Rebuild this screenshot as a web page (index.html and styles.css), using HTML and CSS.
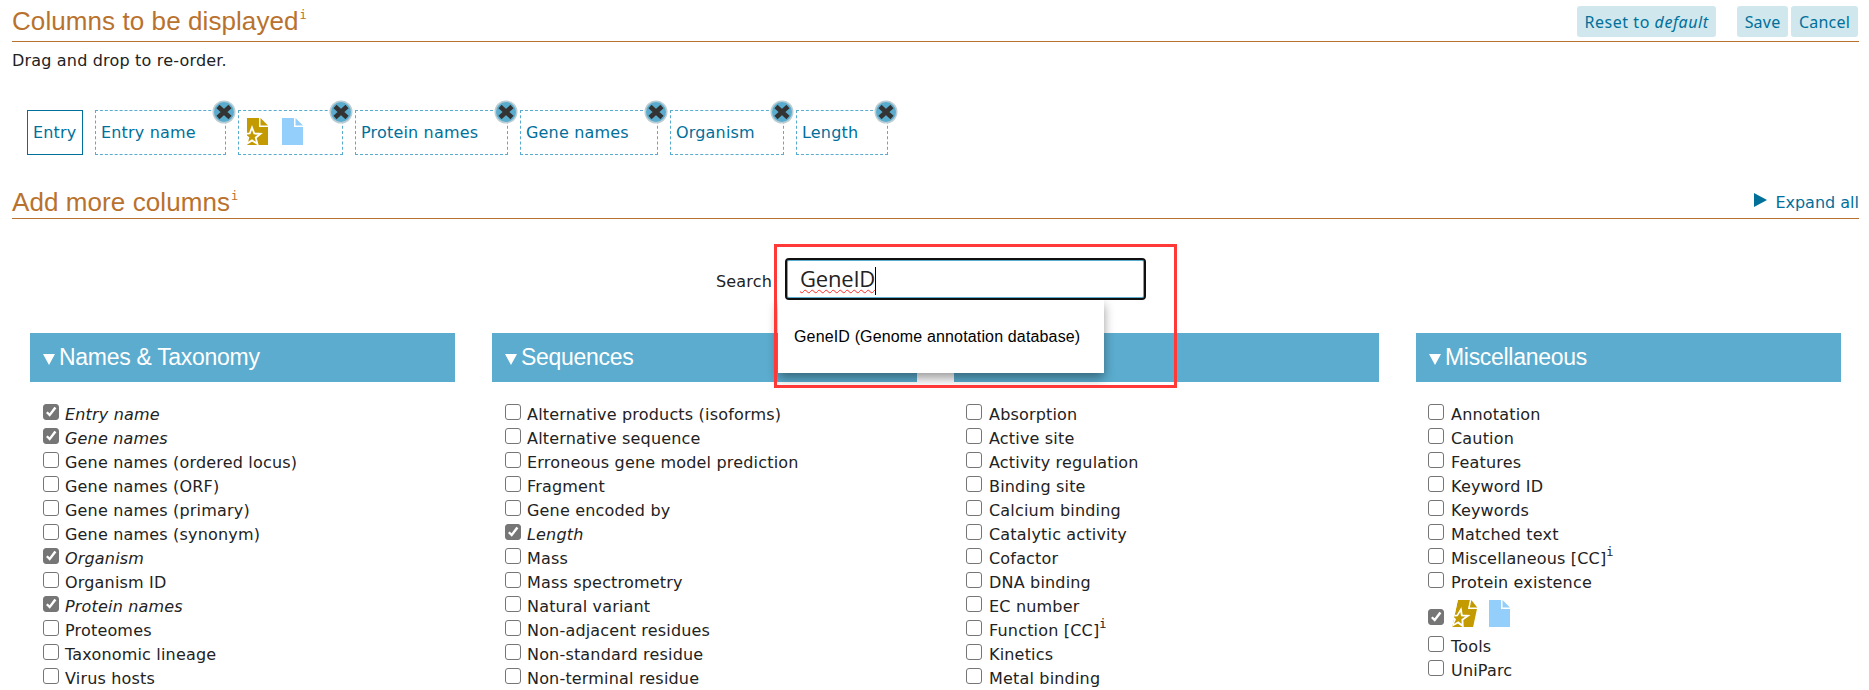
FILE: index.html
```html
<!DOCTYPE html>
<html lang="en">
<head>
    <meta charset="UTF-8">
    <meta name="viewport" content="width=device-width, initial-scale=1.0">
    <title>Customize results table</title>
    <link rel="stylesheet" href="styles.css">
</head>
<body>
    <!-- icons -->
    <svg class="defs" aria-hidden="true">
        <symbol id="reviewed" viewBox="0 0 22 27">
            <path fill="#c39b00" d="M0 0h12v9h9v18H0z"/>
            <path fill="#c39b00" d="M13.5 0l7.5 7.5h-7.5z"/>
            <path fill="#c39b00" stroke="#fff" stroke-width="1.8" d="M5 9.5l2.3 6 6.2.3-4.8 3.9 1.7 6.2L5 22.4l-5.4 3.5 1.7-6.2-4.8-3.9 6.2-.3z"/>
        </symbol>
        <symbol id="unreviewed" viewBox="0 0 22 27">
            <path fill="#94cffc" d="M0 0h12v9h9v18H0z"/>
            <path fill="#94cffc" d="M13.5 0l7.5 7.5h-7.5z"/>
        </symbol>
        <symbol id="remove" viewBox="0 0 24 24">
            <circle cx="12" cy="12" r="11.5" fill="#bccdd3"/>
            <circle cx="12" cy="12" r="10" fill="#59acce"/>
            <path stroke="#333" stroke-width="4.6" d="M6 6.5l12 11M18 6.5l-12 11"/>
        </symbol>
    </svg>

    <div class="title-bar">
        <h2>Columns to be displayed<sup>i</sup></h2>
        <div class="buttons">
            <button class="reset">Reset to <i>default</i></button>
            <button>Save</button>
            <button>Cancel</button>
        </div>
    </div>
    <p class="hint">Drag and drop to re-order.</p>

    <ul class="selected">
        <li class="fixed">Entry</li>
        <li>Entry name<svg class="remove"><use href="#remove"/></svg></li>
        <li><svg class="doc"><use href="#reviewed"/></svg><svg class="doc"><use href="#unreviewed"/></svg><svg class="remove"><use href="#remove"/></svg></li>
        <li>Protein names<svg class="remove"><use href="#remove"/></svg></li>
        <li>Gene names<svg class="remove"><use href="#remove"/></svg></li>
        <li>Organism<svg class="remove"><use href="#remove"/></svg></li>
        <li>Length<svg class="remove"><use href="#remove"/></svg></li>
    </ul>

    <div class="title-bar more">
        <h2>Add more columns<sup>i</sup></h2>
        <a class="expand"><svg viewBox="0 0 13 14"><path fill="#00709b" d="M0 0l13 7-13 7z"/></svg>Expand all</a>
    </div>

    <div class="search">
        <label for="search">Search</label>
        <div class="search-box">
            <div class="input" id="search"><span class="typed">GeneID</span><span class="caret"></span></div>
            <div class="suggestions">GeneID (Genome annotation database)</div>
            <div class="highlight"></div>
        </div>
    </div>

    <div class="groups">
        <section>
            <h3><svg viewBox="0 0 12 11"><path fill="#fff" d="M0 0h12L6 11z"/></svg>Names &amp; Taxonomy</h3>
            <ul>
                <li class="on"><b></b>Entry name</li>
                <li class="on"><b></b>Gene names</li>
                <li><b></b>Gene names (ordered locus)</li>
                <li><b></b>Gene names (ORF)</li>
                <li><b></b>Gene names (primary)</li>
                <li><b></b>Gene names (synonym)</li>
                <li class="on"><b></b>Organism</li>
                <li><b></b>Organism ID</li>
                <li class="on"><b></b>Protein names</li>
                <li><b></b>Proteomes</li>
                <li><b></b>Taxonomic lineage</li>
                <li><b></b>Virus hosts</li>
            </ul>
        </section>
        <section>
            <h3><svg viewBox="0 0 12 11"><path fill="#fff" d="M0 0h12L6 11z"/></svg>Sequences</h3>
            <ul>
                <li><b></b>Alternative products (isoforms)</li>
                <li><b></b>Alternative sequence</li>
                <li><b></b>Erroneous gene model prediction</li>
                <li><b></b>Fragment</li>
                <li><b></b>Gene encoded by</li>
                <li class="on"><b></b>Length</li>
                <li><b></b>Mass</li>
                <li><b></b>Mass spectrometry</li>
                <li><b></b>Natural variant</li>
                <li><b></b>Non-adjacent residues</li>
                <li><b></b>Non-standard residue</li>
                <li><b></b>Non-terminal residue</li>
            </ul>
        </section>
        <section>
            <h3></h3>
            <ul>
                <li><b></b>Absorption</li>
                <li><b></b>Active site</li>
                <li><b></b>Activity regulation</li>
                <li><b></b>Binding site</li>
                <li><b></b>Calcium binding</li>
                <li><b></b>Catalytic activity</li>
                <li><b></b>Cofactor</li>
                <li><b></b>DNA binding</li>
                <li><b></b>EC number</li>
                <li><b></b>Function [CC]<sup>i</sup></li>
                <li><b></b>Kinetics</li>
                <li><b></b>Metal binding</li>
            </ul>
        </section>
        <section>
            <h3><svg viewBox="0 0 12 11"><path fill="#fff" d="M0 0h12L6 11z"/></svg>Miscellaneous</h3>
            <ul>
                <li><b></b>Annotation</li>
                <li><b></b>Caution</li>
                <li><b></b>Features</li>
                <li><b></b>Keyword ID</li>
                <li><b></b>Keywords</li>
                <li><b></b>Matched text</li>
                <li><b></b>Miscellaneous [CC]<sup>i</sup></li>
                <li><b></b>Protein existence</li>
                <li class="on status"><b></b><svg class="doc slanted"><use href="#reviewed"/></svg><svg class="doc"><use href="#unreviewed"/></svg></li>
                <li><b></b>Tools</li>
                <li><b></b>UniParc</li>
            </ul>
        </section>
    </div>
</body>
</html>
```
FILE: styles.css
```css
* {
    box-sizing: border-box;
}
body {
    margin: 0;
    padding: 0 10px 0 12px;
    height: 690px;
    overflow: hidden;
    background: #fff;
    color: #222;
    font-family: Verdana, "DejaVu Sans", sans-serif;
    font-size: 16px;
    letter-spacing: 0.18px;
}
ul, h2, h3, p {
    margin: 0;
    padding: 0;
    list-style: none;
    font-weight: normal;
}
.defs {
    position: absolute;
    width: 0;
    height: 0;
}
.title-bar {
    display: flex;
    justify-content: space-between;
    height: 42px;
    border-bottom: 1px solid #b9722d;
}
h2 {
    color: #b9722d;
    font: 26px/42px Arial, "Liberation Sans", sans-serif;
    letter-spacing: 0.08px;
}
sup {
    font: 12px/1 "DejaVu Sans Mono", monospace;
    letter-spacing: 0;
    vertical-align: top;
}
h2 sup {
    position: relative;
    top: 9px;
    left: 1px;
}
.buttons {
    display: flex;
    gap: 3px;
    padding: 6px 1px 0 0;
}
button {
    height: 31px;
    padding: 0;
    border: 0;
    border-radius: 3px;
    background: #cfe7ed;
    color: #00709b;
    font: 16px/32px "Noto Sans", sans-serif;
    letter-spacing: 0.2px;
    white-space: nowrap;
}
.buttons button:nth-child(1) { width: 139px; margin-right: 18px; letter-spacing: 0.55px; }
.buttons button:nth-child(2) { width: 51px; }
.buttons button:nth-child(3) { width: 67px; }
.hint {
    height: 68px;
    padding-top: 7px;
    line-height: 24px;
}

/* selected columns */
.selected {
    display: flex;
    gap: 12px;
    padding-left: 15px;
}
.selected li {
    position: relative;
    height: 45px;
    padding-left: 5px;
    border: 1px dashed #59acce;
    color: #00709b;
    line-height: 43px;
    white-space: nowrap;
}
.selected li.fixed {
    border: 1px solid #00709b;
}
.selected li:nth-child(1) { width: 56px; }
.selected li:nth-child(2) { width: 131px; }
.selected li:nth-child(3) { width: 105px; }
.selected li:nth-child(4) { width: 153px; }
.selected li:nth-child(5) { width: 138px; }
.selected li:nth-child(6) { width: 114px; }
.selected li:nth-child(7) { width: 92px; }
.remove {
    position: absolute;
    top: -11px;
    right: -11px;
    width: 24px;
    height: 24px;
}
.doc {
    width: 22px;
    height: 27px;
    margin: -4px 10px 0 3px;
    vertical-align: middle;
}
.slanted {
    transform: skewX(-12deg);
}

.more {
    height: 42px;
    margin-top: 22px;
}
.more h2 {
    line-height: 50px;
}
.more sup {
    top: 13px;
    left: 1px;
}
.expand {
    display: flex;
    align-items: center;
    gap: 8px;
    height: 50px;
    color: #00709b;
    letter-spacing: 0;
}
.expand svg {
    width: 13px;
    height: 14px;
    margin-bottom: 4px;
}

.search {
    display: flex;
    margin: 39px 0 33px 704px;
    height: 42px;
}
.search label {
    width: 69px;
    line-height: 47px;
}
.search-box {
    position: relative;
    width: 361px;
}
.input {
    height: 42px;
    padding-left: 13px;
    border: 2px solid #101010;
    border-radius: 4px;
    box-shadow: inset 0 0 0 1px #59acce;
    font: 22px/36px "Open Sans", sans-serif;
    letter-spacing: -0.2px;
}
.typed {
    text-decoration: underline wavy #ff2a2a 1px;
    text-decoration-skip-ink: none;
    text-underline-offset: 2px;
}
.caret {
    display: inline-block;
    width: 1px;
    height: 28px;
    background: #000;
    vertical-align: middle;
}
.suggestions {
    position: absolute;
    z-index: 1;
    top: 42px;
    left: -7px;
    width: 326px;
    height: 73px;
    padding-left: 16px;
    background: #fff;
    box-shadow: 0 5px 10px rgba(0, 0, 0, 0.4);
    clip-path: inset(0 -15px -15px -15px);
    color: #000;
    font: 16px/73px Arial, "Liberation Sans", sans-serif;
    letter-spacing: 0.15px;
    white-space: nowrap;
}
.highlight {
    position: absolute;
    z-index: 2;
    top: -14px;
    left: -11px;
    width: 403px;
    height: 144px;
    border: 3px solid #ff3838;
}

/* available columns */
.groups {
    display: grid;
    grid-template-columns: repeat(4, 425px);
    column-gap: 37px;
    padding-left: 18px;
}
h3 {
    display: flex;
    align-items: center;
    height: 49px;
    margin-bottom: 20px;
    padding: 0 0 1px 13px;
    background: #5bacce;
    color: #fff;
    font: 23px/47px Arial, "Liberation Sans", sans-serif;
    letter-spacing: -0.3px;
}
h3 svg {
    width: 12px;
    height: 11px;
    margin: 4px 4px 0 0;
}
section ul {
    padding-left: 13px;
}
section:nth-child(n+3) ul {
    padding-left: 12px;
}
section li {
    display: flex;
    height: 24px;
    line-height: 26px;
    white-space: nowrap;
}
section b {
    width: 16px;
    height: 16px;
    margin: 2px 6px 0 0;
    border: 1px solid #767676;
    border-radius: 3px;
}
section:nth-child(n+3) b {
    margin-right: 7px;
}
.on {
    font-style: italic;
}
.on b {
    background: #767676;
}
/* tick */
.on b::after {
    content: "";
    display: block;
    width: 14px;
    height: 14px;
    background: #fff;
    clip-path: polygon(2px 8px, 3.6px 6.4px, 5.6px 8.2px, 10.4px 1.8px, 12.4px 3.2px, 5.8px 11.8px);
}
.status {
    height: 40px;
}
.status b {
    margin-top: 15px;
}
.status .doc {
    margin: 6px 8px 0 4px;
}
```
